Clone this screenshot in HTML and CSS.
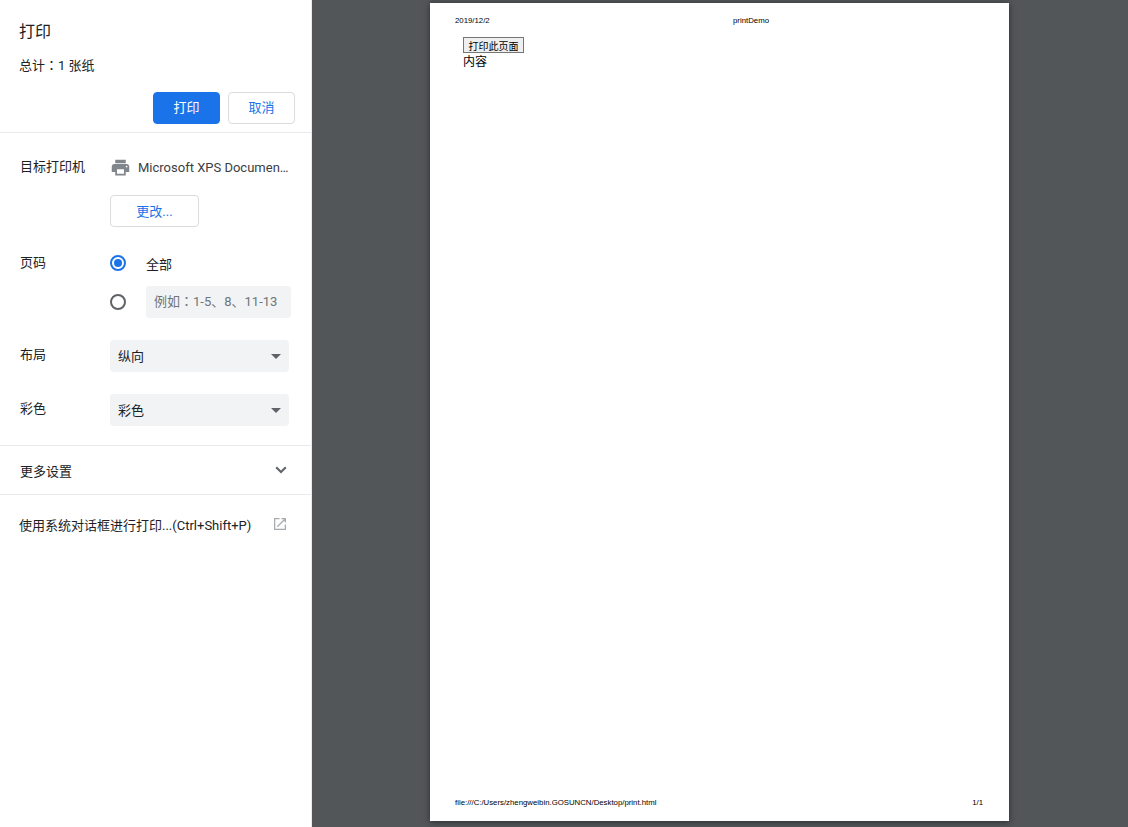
FILE: index.html
```html
<!DOCTYPE html>
<html lang="zh-CN">
<head>
<meta charset="utf-8">
<title>打印</title>
<link rel="stylesheet" href="styles.css">
</head>
<body>
<div class="app">
  <aside class="sidebar">
    <header class="head">
      <h1 class="title">打印</h1>
      <div class="total">总计<span class="colon" lang="zh-TW">：</span>1 张纸</div>
      <div class="actions">
        <button class="btn primary">打印</button>
        <button class="btn">取消</button>
      </div>
    </header>
    <section class="settings">
      <div class="row dest-row">
        <div class="label">目标打印机</div>
        <div class="field">
          <div class="dest">
            <svg class="printer" viewBox="0 0 24 24" width="21" height="21"><path fill="#80868b" d="M19 8H5c-1.66 0-3 1.34-3 3v6h4v4h12v-4h4v-6c0-1.66-1.34-3-3-3zm-3 11H8v-5h8v5zm3-7c-.55 0-1-.45-1-1s.45-1 1-1 1 .45 1 1-.45 1-1 1zm-1-9H6v4h12V3z"/></svg>
            <span class="dest-name">Microsoft XPS Documen…</span>
          </div>
          <button class="btn change">更改...</button>
        </div>
      </div>
      <div class="row pages-row">
        <div class="label">页码</div>
        <div class="field">
          <div class="radio-line">
            <span class="radio on"></span>
            <span class="radio-text">全部</span>
          </div>
          <div class="radio-line second">
            <span class="radio"></span>
            <div class="input">例如<span class="colon" lang="zh-TW">：</span>1-5、8、11-13</div>
          </div>
        </div>
      </div>
      <div class="row select-row">
        <div class="label">布局</div>
        <div class="select"><span class="select-text">纵向</span><span class="caret"></span></div>
      </div>
      <div class="row select-row">
        <div class="label">彩色</div>
        <div class="select"><span class="select-text">彩色</span><span class="caret"></span></div>
      </div>
    </section>
    <div class="more">
      <span>更多设置</span>
      <svg viewBox="0 0 12 8" width="12" height="8"><path d="M1.2 1.2 6 6l4.8-4.8" fill="none" stroke="#5f6368" stroke-width="2"/></svg>
    </div>
    <div class="system">
      <span>使用系统对话框进行打印...(Ctrl+Shift+P)</span>
      <svg class="ext" viewBox="0 0 13 13" width="12" height="12"><path d="M6 .7H.7v11.6h11.6V7M3.5 9.5 12 1M8 .7h4.3V5" fill="none" stroke="#a9acaf" stroke-width="1.4"/></svg>
    </div>
  </aside>
  <main class="preview">
    <div class="page">
      <div class="page-head">
        <span class="date">2019/12/2</span>
        <span class="doc-title">printDemo</span>
      </div>
      <div class="page-body">
        <button class="doc-btn">打印此页面</button>
        <div class="doc-text">内容</div>
      </div>
      <div class="page-foot">
        <span>file:///C:/Users/zhengweibin.GOSUNCN/Desktop/print.html</span>
        <span>1/1</span>
      </div>
    </div>
  </main>
</div>
</body>
</html>
```
FILE: styles.css
```css
* { box-sizing: border-box; }
html, body { margin: 0; height: 100%; overflow: hidden; }
body {
  font-family: Roboto, "Noto Sans CJK SC", sans-serif;
  font-size: 13px;
  color: #202124;
}
.app { display: flex; width: 1128px; height: 827px; }
.sidebar {
  width: 312px;
  flex: none;
  background: #fff;
  border-right: 1px solid #e8eaed;
  display: flex;
  flex-direction: column;
}
.head {
  height: 133px;
  padding: 21px 16px 0 19px;
  border-bottom: 1px solid #e8eaed;
}
.title { margin: 0; font-size: 16px; font-weight: 400; line-height: 22px; }
.total { margin-top: 12px; font-size: 13px; line-height: 20px; }
.colon { font-family: "Noto Sans CJK TC", sans-serif; }
.actions { display: flex; justify-content: flex-end; gap: 8px; margin-top: 16px; }
.btn {
  width: 67px;
  height: 32px;
  padding: 0 0 3px;
  border: 1px solid #dadce0;
  border-radius: 4px;
  background: #fff;
  color: #1a73e8;
  font: inherit;
  font-size: 13px;
}
.btn.primary { background: #1a73e8; border-color: #1a73e8; color: #fff; }
.btn.change { width: 89px; display: block; margin-top: 12px; padding-bottom: 2px; }
.settings { height: 313px; padding-top: 18px; border-bottom: 1px solid #e8eaed; }
.row { display: flex; padding-left: 20px; }
.label { width: 90px; flex: none; line-height: 32px; }
.dest { display: flex; align-items: center; height: 32px; color: #3c4043; }
.printer { margin-right: 7px; }
.dest-name { white-space: nowrap; }
.pages-row { margin-top: 20px; }
.radio-line { display: flex; align-items: center; height: 32px; }
.radio-line.second { margin-top: 7px; }
.radio {
  width: 16px;
  height: 16px;
  border: 2px solid #5f6368;
  border-radius: 50%;
  margin-right: 20px;
  flex: none;
  position: relative;
}
.radio.on { border-color: #1a73e8; }
.radio.on::after {
  content: "";
  position: absolute;
  left: 2px;
  top: 2px;
  width: 8px;
  height: 8px;
  border-radius: 50%;
  background: #1a73e8;
}
.input {
  width: 145px;
  height: 32px;
  line-height: 30px;
  padding-left: 8px;
  background: #f1f3f4;
  border-radius: 4px;
  color: #70757a;
  white-space: nowrap;
}
.select-row { margin-top: 22px; }
.select-row .label { line-height: 30px; }
.select {
  width: 179px;
  height: 32px;
  padding: 0 8px;
  background: #f1f3f4;
  border-radius: 4px;
  display: flex;
  align-items: flex-start;
  justify-content: space-between;
}
.select-text { line-height: 34px; }
.caret {
  width: 0;
  height: 0;
  align-self: center;
  border-left: 5px solid transparent;
  border-right: 5px solid transparent;
  border-top: 5px solid #5f6368;
}
.more {
  height: 49px;
  padding: 0 24px 0 20px;
  display: flex;
  align-items: center;
  justify-content: space-between;
  border-bottom: 1px solid #e8eaed;
}
.system {
  height: 58px;
  padding: 0 25px 0 19px;
  display: flex;
  align-items: center;
  justify-content: space-between;
}
.preview {
  flex: 1;
  background: #525659;
  padding: 3px 0 0 118px;
}
.page {
  width: 579px;
  height: 818px;
  background: #fff;
  box-shadow: 0 1px 6px rgba(0, 0, 0, .5);
  padding: 0 26px 0 25px;
  display: flex;
  flex-direction: column;
  font-family: "Liberation Sans", "Noto Sans CJK SC", sans-serif;
  font-size: 7.8px;
  color: #000;
}
.page-head { display: flex; padding-top: 13px; line-height: 9px; }
.date { width: 278px; }
.page-body { flex: 1; padding: 12px 0 0 8px; }
.doc-btn {
  display: block;
  width: 61px;
  height: 16px;
  padding: 0 0 1px;
  background: #efefef;
  border: 1px solid #767676;
  font: inherit;
  font-size: 10px;
  color: #000;
}
.doc-text { font-size: 12px; line-height: 16px; padding-top: 1px; }
.page-foot {
  display: flex;
  justify-content: space-between;
  line-height: 9px;
  padding-bottom: 14px;
}
```
